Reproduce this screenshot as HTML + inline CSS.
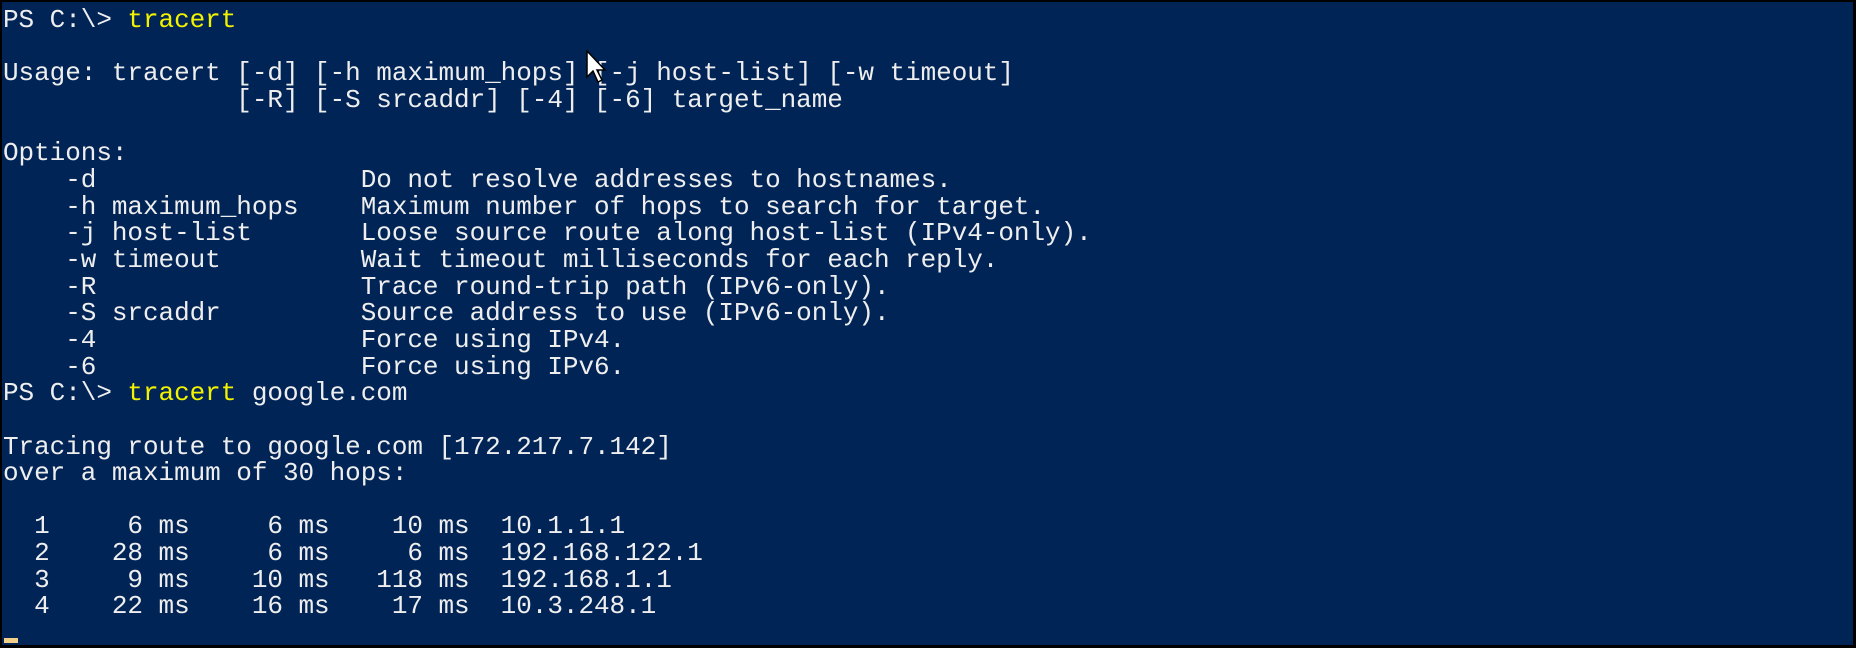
<!DOCTYPE html>
<html><head><meta charset="utf-8"><style>
html,body{margin:0;padding:0;background:#000;}
body{width:1856px;height:648px;overflow:hidden;position:relative;}
.term{position:absolute;left:2px;top:2px;width:1851px;height:643px;background:#012456;}
pre{margin:0;position:absolute;left:1px;top:5px;font-family:"Liberation Mono",monospace;font-size:26px;line-height:26.65px;color:#eeeeee;letter-spacing:-0.05px;}
.y{color:#f2f200;}
.cur{position:absolute;left:2px;top:636px;width:14px;height:5px;background:#f3d08a;}
svg{position:absolute;left:584px;top:48px;}
</style></head><body><div class="term">
<pre>PS C:\&gt; <span class="y">tracert</span>

Usage: tracert [-d] [-h maximum_hops] [-j host-list] [-w timeout]
               [-R] [-S srcaddr] [-4] [-6] target_name

Options:
    -d                 Do not resolve addresses to hostnames.
    -h maximum_hops    Maximum number of hops to search for target.
    -j host-list       Loose source route along host-list (IPv4-only).
    -w timeout         Wait timeout milliseconds for each reply.
    -R                 Trace round-trip path (IPv6-only).
    -S srcaddr         Source address to use (IPv6-only).
    -4                 Force using IPv4.
    -6                 Force using IPv6.
PS C:\&gt; <span class="y">tracert</span> google.com

Tracing route to google.com [172.217.7.142]
over a maximum of 30 hops:

  1     6 ms     6 ms    10 ms  10.1.1.1
  2    28 ms     6 ms     6 ms  192.168.122.1
  3     9 ms    10 ms   118 ms  192.168.1.1
  4    22 ms    16 ms    17 ms  10.3.248.1
</pre>
<svg width="24" height="36" viewBox="0 0 24 36"><path d="M1 1 L1 27 L7 21 L12 32 L16 30 L11 20 L19 20 Z" fill="#fff" stroke="#000" stroke-width="1.5"/></svg>
<div class="cur"></div>
</div></body></html>
